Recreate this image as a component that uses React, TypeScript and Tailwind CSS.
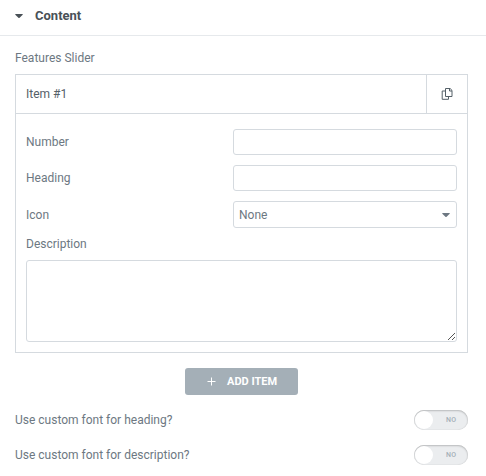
import type { ReactNode } from "react";

function Caret() {
  return (
    <svg viewBox="0 0 8 4" className="h-1 w-2" fill="currentColor">
      <path d="M.7 0h6.6c.5 0 .7.5.4.8L4.6 3.7a.9.9 0 0 1-1.2 0L.3.8C0 .5.2 0 .7 0z" />
    </svg>
  );
}

function Field({ label, children }: { label: string; children: ReactNode }) {
  return (
    <div className="flex items-center justify-between">
      <label>{label}</label>
      {children}
    </div>
  );
}

function Toggle({ label }: { label: string }) {
  return (
    <div className="flex h-5 items-center justify-between">
      <span>{label}</span>
      <button className="flex h-5 w-[54px] items-center rounded-full bg-[#ebedef] shadow-[inset_0_1px_2px_rgba(0,0,0,0.2),inset_0_0_1px_rgba(0,0,0,0.2)]">
        <span className="ml-px h-[18px] w-[18px] rounded-full bg-white" />
        <span className="ml-[13px] text-[7px] leading-none font-medium tracking-[0.4px] text-[#a4afb7]">
          NO
        </span>
      </button>
    </div>
  );
}

const inputClass =
  "w-[224px] rounded-[3px] border border-[#d5dadf] bg-white outline-none";

export default function App() {
  return (
    <div className="h-[476px] w-[486px] overflow-hidden bg-white font-['Roboto',sans-serif] text-[12px] leading-4 text-[#6d7882]">
      {/* Section header */}
      <div className="flex h-9 items-center border-b border-[#e6e9ec] pb-[3px] pl-[15px] text-[13px] font-bold text-[#495157]">
        <Caret />
        <span className="ml-3">Content</span>
      </div>

      <div className="pt-[14px] pr-[18px] pl-[15px]">
        <p>Features Slider</p>

        {/* Repeater item */}
        <div className="mt-2 h-[279px] border border-[#d5dadf]">
          <div className="flex h-[39px] border-b border-[#d5dadf] text-[#556068]">
            <span className="flex flex-1 items-center pl-[10px]">Item #1</span>
            <button className="flex w-[41px] items-center justify-center border-l border-[#d5dadf]">
              <svg
                viewBox="0 0 12 14"
                className="h-[14px] w-3"
                fill="none"
                stroke="currentColor"
                strokeLinejoin="round"
              >
                <path d="M4.5 1.5h4.6l1.9 1.9v6.1H4.5z" />
                <path d="M8.5 1.5V4H11" />
                <path d="M4.5 4H1.2v8.3h6.3V9.5" />
              </svg>
            </button>
          </div>

          <div className="px-[10px] pt-[15px]">
            <div className="flex flex-col gap-[10px]">
              <Field label="Number">
                <input className={`${inputClass} h-[26px]`} />
              </Field>
              <Field label="Heading">
                <input className={`${inputClass} h-[26px]`} />
              </Field>
              <Field label="Icon">
                <div
                  className={`${inputClass} flex h-[27px] items-center justify-between pr-[6px] pl-[5px]`}
                >
                  <span>None</span>
                  <Caret />
                </div>
              </Field>
            </div>
            <label className="mt-2 block">Description</label>
            <div className="mt-2 flex h-[82px] items-end justify-end rounded-[3px] border border-[#d5dadf]">
              <svg
                viewBox="0 0 9 9"
                className="h-[9px] w-[9px]"
                stroke="#555"
              >
                <path d="M1 8L8 1M5 8l3-3" />
              </svg>
            </div>
          </div>
        </div>

        <button className="mx-auto mt-[15px] flex h-[27px] w-[113px] items-center rounded-[3px] bg-[#a4afb7] pl-[22px] text-[11px] font-bold text-white">
          <svg viewBox="0 0 9 9" className="h-[9px] w-[9px]" stroke="white">
            <path d="M4.5 .5v8M.5 4.5h8" />
          </svg>
          <span className="ml-[11px]">ADD ITEM</span>
        </button>

        <div className="mt-[15px] flex flex-col gap-[15px]">
          <Toggle label="Use custom font for heading?" />
          <Toggle label="Use custom font for description?" />
        </div>
      </div>
    </div>
  );
}
